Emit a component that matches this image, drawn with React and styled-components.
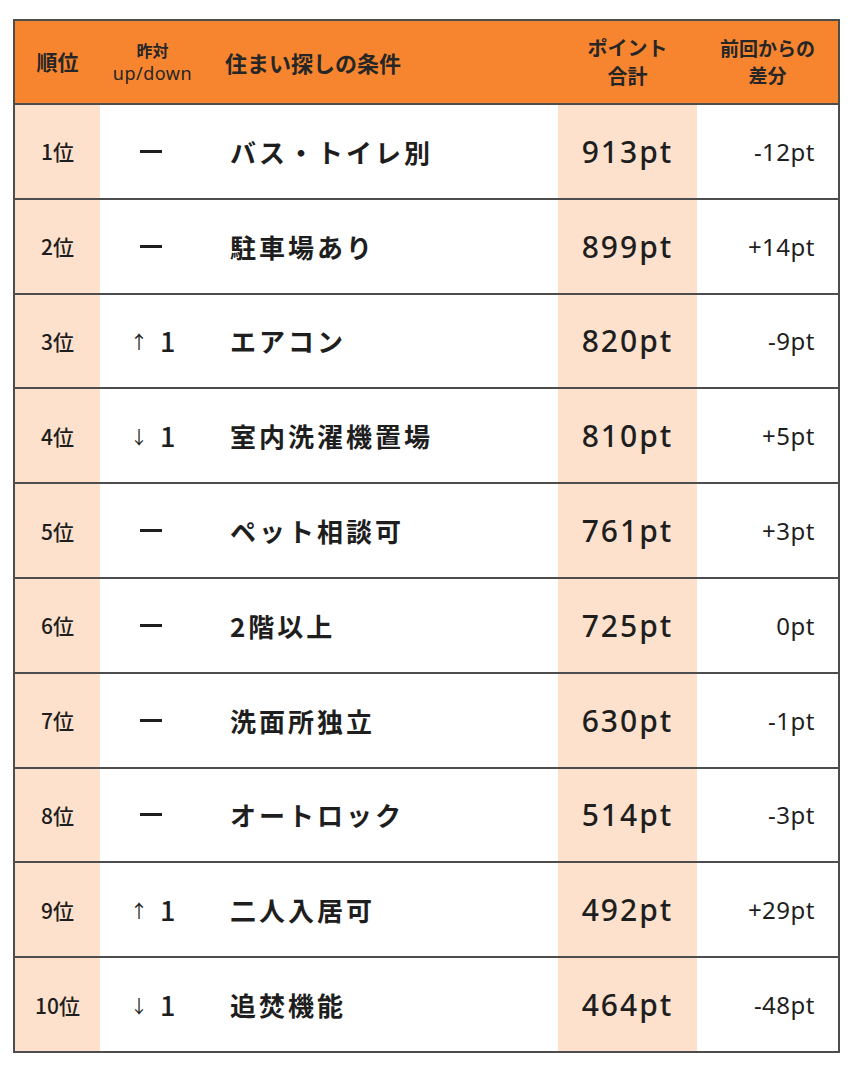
import React from "react";
import styled, { createGlobalStyle } from "styled-components";

const GlobalStyle = createGlobalStyle`
  body {
    margin: 0;
    background: #fff;
    font-family: "Noto Sans CJK JP", "Noto Sans", sans-serif;
    color: #1e1e1e;
  }
`;

const COLS = "85px 105px 353px 139px 141px";

const Page = styled.div`
  padding: 19px 0 0 13px;
`;

const Table = styled.div`
  width: 827px;
  box-sizing: border-box;
  border: 2px solid #4d4d4d;
  display: flex;
  flex-direction: column;
`;

const HeadRow = styled.div`
  display: grid;
  grid-template-columns: ${COLS};
  height: 82px;
  background: #f7852f;
  border-bottom: 2px solid #4d4d4d;
`;

const HeadCell = styled.div`
  display: flex;
  flex-direction: column;
  justify-content: center;
  align-items: ${(p) => (p.left ? "flex-start" : "center")};
  padding-left: ${(p) => (p.left ? "20px" : "0")};
  font-weight: 700;
  font-size: ${(p) => p.size || 18}px;
  line-height: 1.4;
  text-align: center;
  color: #262626;
`;

const Small = styled.span`
  font-size: 16px;
  line-height: 1.4;
`;

const Upd = styled.span`
  font-family: "Noto Sans", sans-serif;
  font-size: 18px;
  font-weight: 400;
  letter-spacing: 0.5px;
  line-height: 1.3;
`;

const Row = styled.div`
  display: grid;
  grid-template-columns: ${COLS};
  height: 92.8px;
  border-bottom: ${(p) => (p.last ? "none" : "2px solid #4d4d4d")};
`;

const Cell = styled.div`
  display: flex;
  align-items: center;
  justify-content: center;
  background: #fff;
`;

const Rank = styled(Cell)`
  font-size: 21px;
  font-weight: 500;
  background: #fde1cc;
`;

const Trend = styled(Cell)`
  justify-content: flex-start;
  padding-left: 30px;
  font-size: 27px;
  font-weight: 500;
`;

const Dash = styled.span`
  display: inline-block;
  width: 22px;
  height: 3px;
  background: #1e1e1e;
  margin-left: 10px;
`;

const Arrow = styled.span`
  font-size: 18px;
  margin-right: 12px;
  font-weight: 400;
`;

const Cond = styled(Cell)`
  justify-content: flex-start;
  padding-left: 25px;
  font-size: 26px;
  font-weight: 700;
  letter-spacing: 3px;
`;

const Points = styled(Cell)`
  background: #fde1cc;
  font-family: "Noto Sans", sans-serif;
  font-size: 30px;
  font-weight: 500;
  letter-spacing: 2px;
`;

const Diff = styled(Cell)`
  justify-content: flex-end;
  padding-right: 23px;
  font-family: "Noto Sans", sans-serif;
  font-size: 24px;
  font-weight: 400;
  letter-spacing: 0.5px;
`;

const rows = [
  { rank: "1位", trend: null, cond: "バス・トイレ別", pt: "913pt", diff: "-12pt" },
  { rank: "2位", trend: null, cond: "駐車場あり", pt: "899pt", diff: "+14pt" },
  { rank: "3位", trend: "up", cond: "エアコン", pt: "820pt", diff: "-9pt" },
  { rank: "4位", trend: "down", cond: "室内洗濯機置場", pt: "810pt", diff: "+5pt" },
  { rank: "5位", trend: null, cond: "ペット相談可", pt: "761pt", diff: "+3pt" },
  { rank: "6位", trend: null, cond: "2階以上", pt: "725pt", diff: "0pt" },
  { rank: "7位", trend: null, cond: "洗面所独立", pt: "630pt", diff: "-1pt" },
  { rank: "8位", trend: null, cond: "オートロック", pt: "514pt", diff: "-3pt" },
  { rank: "9位", trend: "up", cond: "二人入居可", pt: "492pt", diff: "+29pt" },
  { rank: "10位", trend: "down", cond: "追焚機能", pt: "464pt", diff: "-48pt" },
];

export default function App() {
  return (
    <Page>
      <GlobalStyle />
      <Table>
        <HeadRow>
          <HeadCell size={21}>順位</HeadCell>
          <HeadCell>
            <Small>昨対</Small>
            <Upd>up/down</Upd>
          </HeadCell>
          <HeadCell left size={22}>住まい探しの条件</HeadCell>
          <HeadCell size={20}>
            <span>ポイント</span>
            <span>合計</span>
          </HeadCell>
          <HeadCell size={19}>
            <span>前回からの</span>
            <span>差分</span>
          </HeadCell>
        </HeadRow>
        {rows.map((r, i) => (
          <Row key={r.rank} last={i === rows.length - 1}>
            <Rank>{r.rank}</Rank>
            <Trend>
              {r.trend ? (
                <>
                  <Arrow>{r.trend === "up" ? "↑" : "↓"}</Arrow>1
                </>
              ) : (
                <Dash />
              )}
            </Trend>
            <Cond>{r.cond}</Cond>
            <Points>{r.pt}</Points>
            <Diff>{r.diff}</Diff>
          </Row>
        ))}
      </Table>
    </Page>
  );
}
